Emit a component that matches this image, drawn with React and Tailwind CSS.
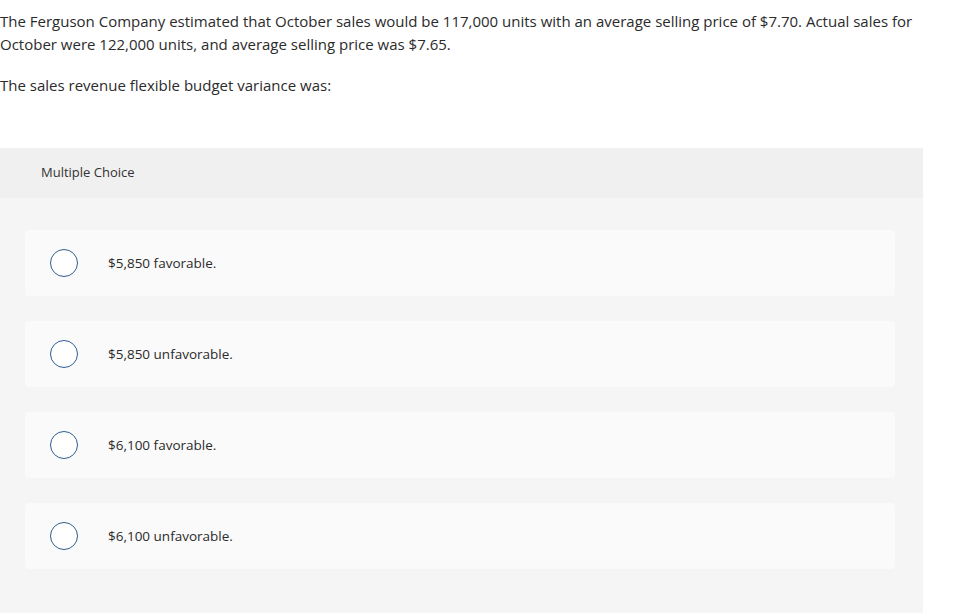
export default function App() {
  const options = [
    "$5,850 favorable.",
    "$5,850 unfavorable.",
    "$6,100 favorable.",
    "$6,100 unfavorable.",
  ];
  return (
    <div className="w-[969px] h-[613px] overflow-hidden bg-white text-[#2b2b2b]" style={{ fontFamily: "'Open Sans', Arial, sans-serif" }}>
      <div className="pt-[10px] text-[15px] leading-[23px] w-[918px]">
        <p>
          The Ferguson Company estimated that October sales would be 117,000 units with an average selling price of $7.70. Actual sales for October were 122,000 units, and average selling price was $7.65.
        </p>
        <p className="mt-[18px]">The sales revenue flexible budget variance was:</p>
      </div>
      <div className="mt-[51px] w-[923px]">
        <div className="h-[50px] bg-[#f0f0f0] flex items-center pl-[41px] text-[13px] text-[#333]">
          Multiple Choice
        </div>
        <div className="bg-[#f5f5f5] pt-[32px] px-[25px] pb-[60px] flex flex-col gap-[25px] w-[923px]">
          {options.map((o) => (
            <div key={o} className="h-[66px] w-[870px] bg-[#fafafa] rounded-[4px] flex items-center">
              <div className="ml-[25px] w-[28px] h-[28px] rounded-full border-[1.5px] border-[#2f5e8e] bg-white shrink-0" />
              <span className="ml-[30px] text-[13.5px] text-[#2b2b2b]">{o}</span>
            </div>
          ))}
        </div>
      </div>
    </div>
  );
}
